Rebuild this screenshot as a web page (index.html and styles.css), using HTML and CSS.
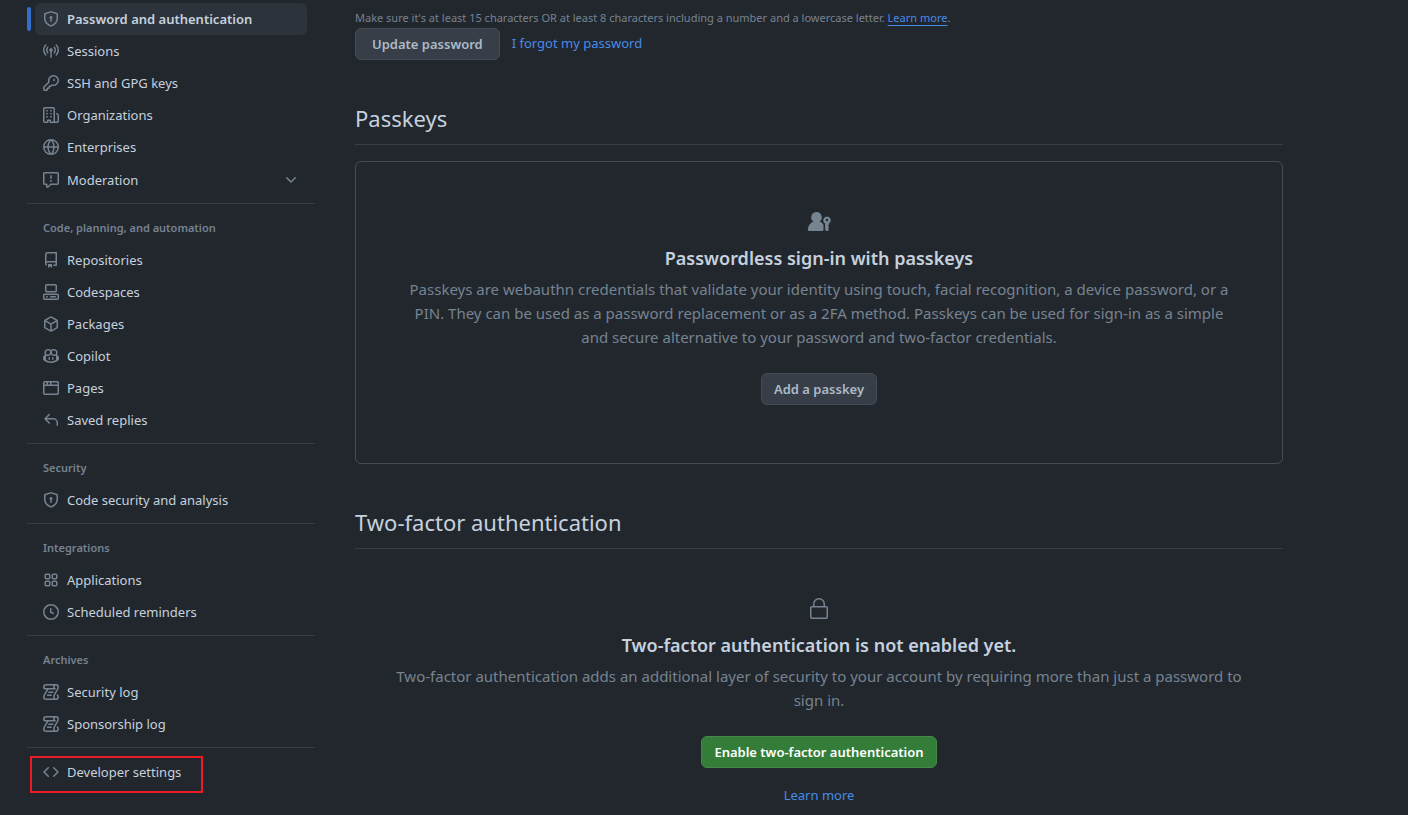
FILE: index.html
```html
<!DOCTYPE html>
<html lang="en">
<head>
<meta charset="utf-8">
<meta name="viewport" content="width=device-width, initial-scale=1">
<title>Password and authentication</title>
<link rel="stylesheet" href="styles.css">
</head>
<body>
<div class="page">
  <nav class="sidebar" aria-label="Settings">
    <ul class="nav-group">
      <li class="nav-entry current"><a class="nav-item" href="#password" aria-current="page"><svg class="icon" viewBox="0 0 16 16"><path d="m8.533.133 5.25 1.68A1.75 1.75 0 0 1 15 3.48V7c0 1.566-.32 3.182-1.303 4.682-.983 1.498-2.585 2.813-5.032 3.855a1.697 1.697 0 0 1-1.33 0c-2.447-1.042-4.049-2.357-5.032-3.855C1.32 10.182 1 8.566 1 7V3.48a1.755 1.755 0 0 1 1.217-1.667l5.25-1.68a1.748 1.748 0 0 1 1.066 0Zm-.61 1.429.001.001-5.25 1.68a.251.251 0 0 0-.174.237V7c0 1.36.275 2.666 1.057 3.859.784 1.194 2.121 2.342 4.366 3.298a.196.196 0 0 0 .154 0c2.245-.957 3.582-2.103 4.366-3.297C13.225 9.666 13.5 8.358 13.5 7V3.48a.25.25 0 0 0-.174-.238l-5.25-1.68a.25.25 0 0 0-.153 0ZM9.5 6.5c0 .536-.286 1.032-.75 1.3v2.45a.75.75 0 0 1-1.5 0V7.8A1.5 1.5 0 1 1 9.5 6.5Z"/></svg>Password and authentication</a></li>
      <li class="nav-entry"><a class="nav-item" href="#sessions"><svg class="icon" viewBox="0 0 16 16"><path d="M8.75 8.582v5.668a.75.75 0 0 1-1.5 0V8.582a1.75 1.75 0 1 1 1.5 0Zm3.983-7.125a.75.75 0 0 1 1.06.026A7.976 7.976 0 0 1 16 7c0 2.139-.84 4.083-2.207 5.517a.75.75 0 1 1-1.086-1.034A6.474 6.474 0 0 0 14.5 7a6.474 6.474 0 0 0-1.793-4.483.75.75 0 0 1 .026-1.06Zm-9.466 0c.3.286.312.76.026 1.06A6.474 6.474 0 0 0 1.5 7a6.47 6.47 0 0 0 1.793 4.483.75.75 0 0 1-1.086 1.034A7.973 7.973 0 0 1 0 7c0-2.139.84-4.083 2.207-5.517a.75.75 0 0 1 1.06-.026Zm8.556 2.321A4.988 4.988 0 0 1 13 7a4.988 4.988 0 0 1-1.177 3.222.75.75 0 1 1-1.146-.967A3.487 3.487 0 0 0 11.5 7c0-.86-.309-1.645-.823-2.255a.75.75 0 0 1 1.146-.967Zm-6.492.958A3.48 3.48 0 0 0 4.5 7a3.48 3.48 0 0 0 .823 2.255.75.75 0 0 1-1.146.967A4.981 4.981 0 0 1 3 7a4.982 4.982 0 0 1 1.188-3.236.75.75 0 1 1 1.143.972Z"/></svg>Sessions</a></li>
      <li class="nav-entry"><a class="nav-item" href="#keys"><svg class="icon" viewBox="0 0 16 16"><path d="M10.5 0a5.499 5.499 0 1 1-1.288 10.848l-.932.932a.749.749 0 0 1-.53.22H7v.75a.749.749 0 0 1-.22.53l-.5.5a.749.749 0 0 1-.53.22H5v.75a.749.749 0 0 1-.22.53l-.5.5a.749.749 0 0 1-.53.22h-2A1.75 1.75 0 0 1 0 14.25v-2c0-.199.079-.389.22-.53l4.932-4.932A5.5 5.5 0 0 1 10.5 0Zm-4 5.5c-.001.431.069.86.205 1.269a.75.75 0 0 1-.181.768L1.5 12.56v1.69c0 .138.112.25.25.25h1.69l.06-.06v-1.19a.75.75 0 0 1 .75-.75h1.19l.06-.06v-1.19a.75.75 0 0 1 .75-.75h1.19l1.023-1.025a.75.75 0 0 1 .768-.18A4 4 0 1 0 6.5 5.5ZM11 6a1 1 0 1 1 0-2 1 1 0 0 1 0 2Z"/></svg>SSH and GPG keys</a></li>
      <li class="nav-entry"><a class="nav-item" href="#organizations"><svg class="icon" viewBox="0 0 16 16"><path d="M1.75 16A1.75 1.75 0 0 1 0 14.25V1.75C0 .784.784 0 1.75 0h8.5C11.216 0 12 .784 12 1.75v12.5c0 .085-.006.168-.018.25h2.268a.25.25 0 0 0 .25-.25V8.285a.25.25 0 0 0-.111-.208l-1.055-.703a.749.749 0 1 1 .832-1.248l1.055.703c.487.325.779.871.779 1.456v5.965A1.75 1.75 0 0 1 14.25 16h-3.5a.766.766 0 0 1-.197-.026c-.099.017-.2.026-.303.026h-3a.75.75 0 0 1-.75-.75V14h-1v1.25a.75.75 0 0 1-.75.75Zm-.25-1.75c0 .138.112.25.25.25H4v-1.25a.75.75 0 0 1 .75-.75h2.5a.75.75 0 0 1 .75.75v1.25h2.25a.25.25 0 0 0 .25-.25V1.75a.25.25 0 0 0-.25-.25h-8.5a.25.25 0 0 0-.25.25ZM3.75 6h.5a.75.75 0 0 1 0 1.5h-.5a.75.75 0 0 1 0-1.5ZM3 3.75A.75.75 0 0 1 3.75 3h.5a.75.75 0 0 1 0 1.5h-.5A.75.75 0 0 1 3 3.75Zm4 3A.75.75 0 0 1 7.75 6h.5a.75.75 0 0 1 0 1.5h-.5A.75.75 0 0 1 7 6.75ZM7.75 3h.5a.75.75 0 0 1 0 1.5h-.5a.75.75 0 0 1 0-1.5ZM3 9.75A.75.75 0 0 1 3.75 9h.5a.75.75 0 0 1 0 1.5h-.5A.75.75 0 0 1 3 9.75ZM7.75 9h.5a.75.75 0 0 1 0 1.5h-.5a.75.75 0 0 1 0-1.5Z"/></svg>Organizations</a></li>
      <li class="nav-entry"><a class="nav-item" href="#enterprises"><svg class="icon" viewBox="0 0 16 16"><path d="M8 0a8 8 0 1 1 0 16A8 8 0 0 1 8 0ZM5.78 8.75a9.64 9.64 0 0 0 1.363 4.177c.255.426.542.832.857 1.215.245-.296.551-.705.857-1.215A9.64 9.64 0 0 0 10.22 8.75Zm4.44-1.5a9.64 9.64 0 0 0-1.363-4.177c-.307-.51-.612-.919-.857-1.215a9.927 9.927 0 0 0-.857 1.215A9.64 9.64 0 0 0 5.78 7.25Zm-5.944 1.5H1.543a6.507 6.507 0 0 0 4.666 5.5c-.123-.181-.24-.365-.352-.552-.715-1.192-1.437-2.874-1.581-4.948Zm-2.733-1.5h2.733c.144-2.074.866-3.756 1.58-4.948.12-.197.237-.381.353-.552a6.507 6.507 0 0 0-4.666 5.5Zm10.181 1.5c-.144 2.074-.866 3.756-1.58 4.948-.12.197-.237.381-.353.552a6.507 6.507 0 0 0 4.666-5.5Zm2.733-1.5a6.507 6.507 0 0 0-4.666-5.5c.123.181.24.365.353.552.714 1.192 1.436 2.874 1.58 4.948Z"/></svg>Enterprises</a></li>
      <li class="nav-entry"><button class="nav-item nav-toggle" type="button" aria-expanded="false"><svg class="icon" viewBox="0 0 16 16"><path d="M0 1.75C0 .784.784 0 1.75 0h12.5C15.216 0 16 .784 16 1.75v9.5A1.75 1.75 0 0 1 14.25 13H8.06l-2.573 2.573A1.458 1.458 0 0 1 3 14.543V13H1.75A1.75 1.75 0 0 1 0 11.25Zm1.75-.25a.25.25 0 0 0-.25.25v9.5c0 .138.112.25.25.25h2a.75.75 0 0 1 .75.75v2.19l2.72-2.72a.749.749 0 0 1 .53-.22h6.5a.25.25 0 0 0 .25-.25v-9.5a.25.25 0 0 0-.25-.25Zm7 2.25v2.5a.75.75 0 0 1-1.5 0v-2.5a.75.75 0 0 1 1.5 0ZM9 9a1 1 0 1 1-2 0 1 1 0 0 1 2 0Z"/></svg>Moderation<svg class="icon chevron" viewBox="0 0 16 16"><path d="M12.78 5.22a.749.749 0 0 1 0 1.06l-4.25 4.25a.749.749 0 0 1-1.06 0L3.22 6.28a.749.749 0 1 1 1.06-1.06L8 8.939l3.72-3.719a.749.749 0 0 1 1.06 0Z"/></svg></button></li>
    </ul>

    <h3 class="nav-title">Code, planning, and automation</h3>
    <ul class="nav-group">
      <li class="nav-entry"><a class="nav-item" href="#repositories"><svg class="icon" viewBox="0 0 16 16"><path d="M2 2.5A2.5 2.5 0 0 1 4.5 0h8.75a.75.75 0 0 1 .75.75v12.5a.75.75 0 0 1-.75.75h-2.5a.75.75 0 0 1 0-1.5h1.75v-2h-8a1 1 0 0 0-.714 1.7.75.75 0 1 1-1.072 1.05A2.495 2.495 0 0 1 2 11.5Zm10.5-1h-8a1 1 0 0 0-1 1v6.708A2.486 2.486 0 0 1 4.5 9h8ZM5 12.25a.25.25 0 0 1 .25-.25h3.5a.25.25 0 0 1 .25.25v3.25a.25.25 0 0 1-.4.2l-1.45-1.087a.249.249 0 0 0-.3 0L5.4 15.7a.25.25 0 0 1-.4-.2Z"/></svg>Repositories</a></li>
      <li class="nav-entry"><a class="nav-item" href="#codespaces"><svg class="icon" viewBox="0 0 16 16"><path d="M0 11.25c0-.966.784-1.75 1.75-1.75h12.5c.966 0 1.75.784 1.75 1.75v3A1.75 1.75 0 0 1 14.25 16H1.75A1.75 1.75 0 0 1 0 14.25Zm2-9.5C2 .784 2.784 0 3.75 0h8.5C13.216 0 14 .784 14 1.75v5a1.75 1.75 0 0 1-1.75 1.75h-8.5A1.75 1.75 0 0 1 2 6.75Zm1.75-.25a.25.25 0 0 0-.25.25v5c0 .138.112.25.25.25h8.5a.25.25 0 0 0 .25-.25v-5a.25.25 0 0 0-.25-.25Zm-2 9.5a.25.25 0 0 0-.25.25v3c0 .138.112.25.25.25h12.5a.25.25 0 0 0 .25-.25v-3a.25.25 0 0 0-.25-.25Z"/><path d="M7 12.75a.75.75 0 0 1 .75-.75h4.5a.75.75 0 0 1 0 1.5h-4.5a.75.75 0 0 1-.75-.75Zm-4 0a.75.75 0 0 1 .75-.75h.5a.75.75 0 0 1 0 1.5h-.5a.75.75 0 0 1-.75-.75Z"/></svg>Codespaces</a></li>
      <li class="nav-entry"><a class="nav-item" href="#packages"><svg class="icon" viewBox="0 0 16 16"><path d="m8.878.392 5.25 3.045c.54.314.872.89.872 1.514v6.098a1.75 1.75 0 0 1-.872 1.514l-5.25 3.045a1.75 1.75 0 0 1-1.756 0l-5.25-3.045A1.75 1.75 0 0 1 1 11.049V4.951c0-.624.332-1.201.872-1.514L7.122.392a1.75 1.75 0 0 1 1.756 0ZM7.875 1.69l-4.63 2.685L8 7.133l4.755-2.758-4.63-2.685a.248.248 0 0 0-.25 0ZM2.5 5.677v5.372c0 .09.047.171.125.216l4.625 2.683V8.432Zm6.25 8.271 4.625-2.683a.25.25 0 0 0 .125-.216V5.677L8.75 8.432Z"/></svg>Packages</a></li>
      <li class="nav-entry"><a class="nav-item" href="#copilot"><svg class="icon" viewBox="0 0 16 16"><path d="M7.998 15.035c-4.562 0-7.873-2.914-7.998-3.749V9.338c.085-.628.677-1.686 1.588-2.065.013-.07.024-.143.036-.218.029-.183.06-.384.126-.612-.201-.508-.254-1.084-.254-1.656 0-.87.128-1.769.693-2.484.579-.733 1.494-1.124 2.724-1.261 1.206-.134 2.262.034 2.944.765.05.053.096.108.139.165.044-.057.094-.112.143-.165.682-.731 1.738-.899 2.944-.765 1.23.137 2.145.528 2.724 1.261.566.715.693 1.614.693 2.484 0 .572-.053 1.148-.254 1.656.066.228.098.429.126.612.012.076.024.148.037.218.924.385 1.522 1.471 1.591 2.095v1.872c0 .766-3.351 3.795-8.002 3.795Zm0-1.485c2.28 0 4.584-1.11 5.002-1.433V7.862l-.023-.116c-.49.21-1.075.291-1.727.291-1.146 0-2.059-.327-2.71-.991A3.222 3.222 0 0 1 8 6.303a3.24 3.24 0 0 1-.544.743c-.65.664-1.563.991-2.71.991-.652 0-1.236-.081-1.727-.291l-.023.116v4.255c.419.323 2.722 1.433 5.002 1.433ZM6.762 2.83c-.193-.206-.637-.413-1.682-.297-1.019.113-1.479.404-1.713.7-.247.312-.369.789-.369 1.554 0 .793.129 1.171.308 1.371.162.181.519.379 1.442.379.853 0 1.339-.235 1.638-.54.315-.322.527-.827.617-1.553.117-.935-.037-1.395-.241-1.614Zm4.155-.297c-1.044-.116-1.488.091-1.681.297-.204.219-.359.679-.242 1.614.091.726.303 1.231.618 1.553.299.305.784.54 1.638.54.922 0 1.28-.198 1.442-.379.179-.2.308-.578.308-1.371 0-.765-.123-1.242-.37-1.554-.233-.296-.693-.587-1.713-.7Z"/><path d="M6.25 9.037a.75.75 0 0 1 .75.75v1.501a.75.75 0 0 1-1.5 0V9.787a.75.75 0 0 1 .75-.75Zm4.25.75v1.501a.75.75 0 0 1-1.5 0V9.787a.75.75 0 0 1 1.5 0Z"/></svg>Copilot</a></li>
      <li class="nav-entry"><a class="nav-item" href="#pages"><svg class="icon" viewBox="0 0 16 16"><path d="M0 2.75C0 1.784.784 1 1.75 1h12.5c.966 0 1.75.784 1.75 1.75v10.5A1.75 1.75 0 0 1 14.25 15H1.75A1.75 1.75 0 0 1 0 13.25ZM14.5 6h-13v7.25c0 .138.112.25.25.25h12.5a.25.25 0 0 0 .25-.25Zm-6-3.5v2h6V2.75a.25.25 0 0 0-.25-.25ZM5 2.5v2h2v-2Zm-3.25 0a.25.25 0 0 0-.25.25V4.5h2v-2Z"/></svg>Pages</a></li>
      <li class="nav-entry"><a class="nav-item" href="#replies"><svg class="icon" viewBox="0 0 16 16"><path d="M6.78 1.97a.75.75 0 0 1 0 1.06L3.81 6h6.44A4.75 4.75 0 0 1 15 10.75v2.5a.75.75 0 0 1-1.5 0v-2.5a3.25 3.25 0 0 0-3.25-3.25H3.81l2.97 2.97a.749.749 0 0 1-.326 1.275.749.749 0 0 1-.734-.215L1.47 7.28a.75.75 0 0 1 0-1.06l4.25-4.25a.75.75 0 0 1 1.06 0Z"/></svg>Saved replies</a></li>
    </ul>

    <h3 class="nav-title">Security</h3>
    <ul class="nav-group">
      <li class="nav-entry"><a class="nav-item" href="#analysis"><svg class="icon" viewBox="0 0 16 16"><path d="m8.533.133 5.25 1.68A1.75 1.75 0 0 1 15 3.48V7c0 1.566-.32 3.182-1.303 4.682-.983 1.498-2.585 2.813-5.032 3.855a1.697 1.697 0 0 1-1.33 0c-2.447-1.042-4.049-2.357-5.032-3.855C1.32 10.182 1 8.566 1 7V3.48a1.755 1.755 0 0 1 1.217-1.667l5.25-1.68a1.748 1.748 0 0 1 1.066 0Zm-.61 1.429.001.001-5.25 1.68a.251.251 0 0 0-.174.237V7c0 1.36.275 2.666 1.057 3.859.784 1.194 2.121 2.342 4.366 3.298a.196.196 0 0 0 .154 0c2.245-.957 3.582-2.103 4.366-3.297C13.225 9.666 13.5 8.358 13.5 7V3.48a.25.25 0 0 0-.174-.238l-5.25-1.68a.25.25 0 0 0-.153 0ZM9.5 6.5c0 .536-.286 1.032-.75 1.3v2.45a.75.75 0 0 1-1.5 0V7.8A1.5 1.5 0 1 1 9.5 6.5Z"/></svg>Code security and analysis</a></li>
    </ul>

    <h3 class="nav-title">Integrations</h3>
    <ul class="nav-group">
      <li class="nav-entry"><a class="nav-item" href="#applications"><svg class="icon icon-outline" viewBox="0 0 16 16"><rect x="2.25" y="2.25" width="4.5" height="4.5" rx="1"/><rect x="9.25" y="2.25" width="4.5" height="4.5" rx="1"/><rect x="2.25" y="9.25" width="4.5" height="4.5" rx="1"/><rect x="9.25" y="9.25" width="4.5" height="4.5" rx="1"/></svg>Applications</a></li>
      <li class="nav-entry"><a class="nav-item" href="#reminders"><svg class="icon" viewBox="0 0 16 16"><path d="M8 0a8 8 0 1 1 0 16A8 8 0 0 1 8 0ZM1.5 8a6.5 6.5 0 1 0 13 0 6.5 6.5 0 0 0-13 0Zm7-3.25v2.992l2.028.812a.75.75 0 0 1-.557 1.392l-2.5-1A.751.751 0 0 1 7 8.25v-3.5a.75.75 0 0 1 1.5 0Z"/></svg>Scheduled reminders</a></li>
    </ul>

    <h3 class="nav-title">Archives</h3>
    <ul class="nav-group">
      <li class="nav-entry"><a class="nav-item" href="#security-log"><svg class="icon icon-outline" viewBox="0 0 16 16"><path d="M12 4.75H2.8C1.500 4.750.75 4 .75 2.900A2.150 2.150 0 0 1 3 .75h10A2.250 2.250 0 0 1 15.250 3c0 3.200-4.500 6.600-4.500 10A2.250 2.250 0 1 0 14.300 11.200M12 4.750C11.100 4.200 10.750 3.700 10.750 3A2.250 2.250 0 0 1 13 .75M5 4.750C3.800 7.700.75 10.200.75 13A2.250 2.250 0 0 0 3 15.250h10M5.900 8.250h3.900M4.500 11.250h3.600" stroke-linecap="round"/></svg>Security log</a></li>
      <li class="nav-entry"><a class="nav-item" href="#sponsorship-log"><svg class="icon icon-outline" viewBox="0 0 16 16"><path d="M12 4.75H2.8C1.500 4.750.75 4 .75 2.900A2.150 2.150 0 0 1 3 .75h10A2.250 2.250 0 0 1 15.250 3c0 3.200-4.500 6.600-4.500 10A2.250 2.250 0 1 0 14.300 11.200M12 4.750C11.100 4.200 10.750 3.700 10.750 3A2.250 2.250 0 0 1 13 .75M5 4.750C3.800 7.700.75 10.200.75 13A2.250 2.250 0 0 0 3 15.250h10M5.900 8.250h3.900M4.500 11.250h3.600" stroke-linecap="round"/></svg>Sponsorship log</a></li>
    </ul>

    <ul class="nav-group">
      <li class="nav-entry highlighted"><a class="nav-item" href="#developer"><svg class="icon" viewBox="0 0 16 16"><path d="m11.28 3.22 4.25 4.25a.75.75 0 0 1 0 1.06l-4.25 4.25a.749.749 0 0 1-1.275-.326.749.749 0 0 1 .215-.734L13.94 8l-3.72-3.72a.749.749 0 0 1 .326-1.275.749.749 0 0 1 .734.215Zm-6.56 0a.751.751 0 0 1 1.042.018.751.751 0 0 1 .018 1.042L2.06 8l3.72 3.72a.749.749 0 0 1-.326 1.275.749.749 0 0 1-.734-.215L.47 8.53a.75.75 0 0 1 0-1.06Z"/></svg>Developer settings</a></li>
    </ul>
  </nav>

  <main class="content">
    <p class="note">Make sure it's at least 15 characters OR at least 8 characters including a number and a lowercase letter. <a class="note-link" href="#rules">Learn more</a>.</p>
    <div class="actions">
      <button class="btn btn-wide" type="button">Update password</button>
      <a class="link" href="#forgot">I forgot my password</a>
    </div>

    <section class="section">
      <h2 class="section-title">Passkeys</h2>
      <div class="blank boxed">
        <svg class="blank-icon" viewBox="0 0 24 24"><path d="M9.500 2a5.300 5.300 0 0 1 3.100 9.600c1.700.7 3.100 1.800 3.900 3.200v4.700c0 .8-.3 1.500-.9 1.500H2c-.8 0-1.300-.6-1.200-1.400.4-3.900 2.500-6.800 5.600-8A5.300 5.300 0 0 1 9.500 2Z"/><path fill-rule="evenodd" d="M20 6.500a3.700 3.700 0 0 1 1.900 6.900v1.300l-.9.9.9.9v1l-.9.9.9.9v.7L20.500 21h-1l-1.400-1.200v-6.400A3.700 3.700 0 0 1 20 6.500Zm0 2.300a1.200 1.200 0 1 0 0 2.400 1.200 1.200 0 0 0 0-2.400Z"/></svg>
        <h3 class="blank-title">Passwordless sign-in with passkeys</h3>
        <p class="blank-text">Passkeys are webauthn credentials that validate your identity using touch, facial recognition, a device password, or a PIN. They can be used as a password replacement or as a 2FA method. Passkeys can be used for sign-in as a simple and secure alternative to your password and two-factor credentials.</p>
        <button class="btn" type="button">Add a passkey</button>
      </div>
    </section>

    <section class="section">
      <h2 class="section-title">Two-factor authentication</h2>
      <div class="blank">
        <svg class="blank-icon icon-outline" viewBox="0 0 24 24"><rect x="3.75" y="9.75" width="16.5" height="11.5" rx="1"/><path d="M6.750 9.750V7a5.250 5.250 0 0 1 10.500 0v2.750"/></svg>
        <h3 class="blank-title">Two-factor authentication is not enabled yet.</h3>
        <p class="blank-text">Two-factor authentication adds an additional layer of security to your account by requiring more than just a password to sign in.</p>
        <button class="btn btn-primary" type="button">Enable two-factor authentication</button>
        <a class="link blank-link" href="#two-factor">Learn more</a>
      </div>
    </section>
  </main>
</div>
</body>
</html>
```
FILE: styles.css
```css
*,
*::before,
*::after {
  box-sizing: border-box;
}

body {
  margin: 0;
  background: #22272e;
  color: #c5d1de;
  font-family: "Noto Sans", "Open Sans", sans-serif;
  font-size: 13px;
  line-height: 20px;
}

h2, h3, p, ul {
  margin: 0;
  padding: 0;
}

.page {
  display: grid;
  grid-template-columns: 288px minmax(0, 1fr);
  gap: 40px;
  padding: 3px 125px 8px 27px;
}

/* Sidebar */
.nav-group {
  list-style: none;
  padding: 0 8px 7px;
}

.nav-group + .nav-title,
.nav-group + .nav-group {
  border-top: 1px solid #373e47;
  padding-top: 8px;
}

.nav-title {
  padding: 0 16px;
  font-size: 11px;
  font-weight: 600;
  line-height: 32px;
  color: #768390;
}

.nav-entry {
  position: relative;
}

.nav-item {
  display: flex;
  align-items: center;
  gap: 8px;
  width: 100%;
  padding: 6px 8px;
  border: 0;
  border-radius: 6px;
  background: none;
  color: inherit;
  font: inherit;
  text-align: left;
  text-decoration: none;
}

.nav-toggle {
  min-height: 33px;
}

.current .nav-item {
  background: #2d333b;
  font-weight: 600;
}

.current::before {
  content: "";
  position: absolute;
  left: -8px;
  top: 4px;
  width: 4px;
  height: 24px;
  border-radius: 6px;
  background: #316dca;
}

.highlighted::after {
  content: "";
  position: absolute;
  left: -5px;
  top: 0;
  width: 173px;
  height: 37px;
  border: 2px solid #ed1c24;
  pointer-events: none;
}

.icon {
  flex: none;
  width: 16px;
  height: 16px;
  fill: #768390;
}

.icon-outline {
  fill: none;
  stroke: #768390;
  stroke-width: 1.5;
}

.chevron {
  margin-left: auto;
}

/* Main column */
.content {
  padding-top: 5px;
}

.note {
  font-size: 11px;
  color: #768390;
}

.note-link {
  color: #478be6;
  text-decoration: underline;
  text-underline-offset: 3px;
}

.link {
  color: #478be6;
  text-decoration: none;
}

.actions {
  display: flex;
  gap: 12px;
  line-height: 30px;
}

.btn {
  height: 32px;
  padding: 0 12px;
  border: 1px solid #444c56;
  border-radius: 6px;
  background: #373e47;
  color: #adbac7;
  font: inherit;
  font-weight: 600;
}

.btn-wide {
  padding: 0 16px;
}

.btn-primary {
  border-color: #46874b;
  background: #347d39;
  color: #ffffff;
}

.section {
  margin-top: 40px;
}

.section-title {
  padding-bottom: 8px;
  border-bottom: 1px solid #373e47;
  font-size: 22px;
  font-weight: 400;
  line-height: 36px;
}

.blank {
  display: flex;
  flex-direction: column;
  align-items: center;
  padding: 48px 32px 0;
  text-align: center;
}

.boxed {
  margin-top: 16px;
  padding: 48px 48px 58px;
  border: 1px solid #444c56;
  border-radius: 6px;
}

.blank-icon {
  width: 24px;
  height: 24px;
  margin-bottom: 8px;
}

.blank-icon:not(.icon-outline) {
  fill: #768390;
}

.blank-title {
  margin-bottom: 3px;
  font-size: 18px;
  font-weight: 600;
  line-height: 32px;
}

.blank-text {
  margin-bottom: 24px;
  color: #768390;
  font-size: 15px;
  line-height: 24px;
}

.blank-link {
  margin-top: 17px;
}
```
